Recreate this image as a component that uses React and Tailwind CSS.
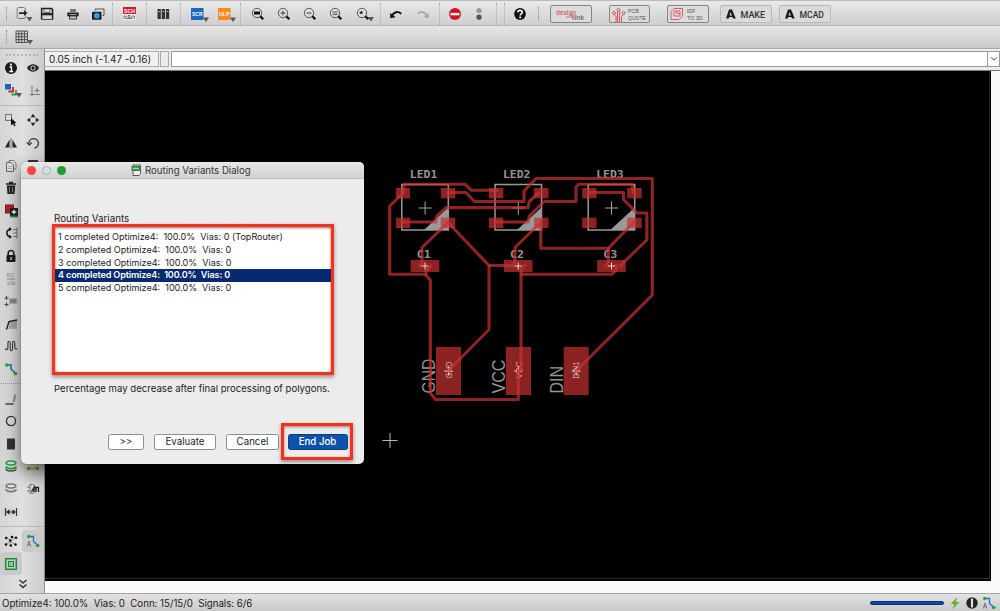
import React from "react";

function Icon({ w = 16, h = 16, children, className = "" }) {
  return (
    <svg width={w} height={h} viewBox={`0 0 ${w} ${h}`} fill="none" className={`shrink-0 ${className}`}>
      {children}
    </svg>
  );
}

const DropArrow = ({ x = 14, y = 12 }) => <path d={`M${x} ${y}h6l-3 4.5z`} fill="#555" />;

/* ---------- top toolbar icons ---------- */
function OpenIcon() {
  return (
    <Icon w={22} h={18}>
      <path d="M11.500 6V3.800L9.800 2.500H4.500A1.300 1.300 0 0 0 3.200 3.800v8.400a1.300 1.300 0 0 0 1.300 1.300h5.700A1.300 1.300 0 0 0 11.500 12.200v-1.700" stroke="#777" />
      <path d="M5 7.200h5V5.200L13.500 8.100 10 11V9H5z" fill="#222" />
      <DropArrow x={12.5} y={12} />
    </Icon>
  );
}
function SaveIcon() {
  return (
    <Icon w={14} h={14}>
      <path d="M1.600 12.600v-11h10l1 1v10" stroke="#222" strokeWidth="1.500" />
      <path d="M4 2v3.500h6V2" stroke="#666" />
      <path d="M2 7.200h10" stroke="#222" strokeWidth="2.200" />
      <path d="M2 12.500h10.500" stroke="#444" />
    </Icon>
  );
}
function PrintIcon() {
  return (
    <Icon w={14} h={14}>
      <path d="M4 2h6v3H4z" fill="#777" />
      <path d="M1.300 5.500h11.400v3.800H1.300z" fill="#222" />
      <path d="M3.500 9h7v3h-7z" fill="#ccc" stroke="#333" />
      <path d="M3.500 7.500h7" stroke="#999" />
    </Icon>
  );
}
function LayersIcon() {
  return (
    <Icon w={14} h={14}>
      <path d="M4 3.500V2h9v6.500h-1.500" stroke="#555" />
      <rect x="1" y="4.700" width="9.500" height="8" rx="1" fill="#1b1b1b" />
      <circle cx="5.800" cy="8.700" r="2.900" fill="#27a0e8" />
    </Icon>
  );
}
function SchIcon() {
  return (
    <Icon w={13} h={13}>
      <rect x="0" y="0" width="13" height="13" fill="#eee" />
      <rect x="0" y="0" width="13" height="7" fill="#cc1f35" />
      <text x="1" y="5.600" textLength="11" lengthAdjust="spacingAndGlyphs" fontSize="5.500" fontWeight="700" fill="#fff" fontFamily="Liberation Sans, sans-serif">SCH</text>
      <path d="M1 12V9h2v3M5 8.500h2v2H5zM9 12V9h2.500v3M3 11.500h6" stroke="#777" />
    </Icon>
  );
}
function LibraryIcon() {
  return (
    <Icon w={13} h={12}>
      {[0.5, 4.7, 8.9].map((x) => (
        <g key={x}>
          <rect x={x} y="1" width="3.300" height="10" fill="#333" />
          <path d={`M${x + 0.8} 3.500h1.800`} stroke="#bbb" />
        </g>
      ))}
    </Icon>
  );
}
function TagIcon({ label, fill }) {
  return (
    <Icon w={20} h={16}>
      <rect x="1" y="2" width="12.500" height="12" fill={fill} />
      <text x="2" y="10" textLength="10.500" lengthAdjust="spacingAndGlyphs" fontSize="5.500" fontWeight="700" fill="#fff" fontFamily="Liberation Sans, sans-serif">{label}</text>
      <DropArrow x={13} y={11.500} />
    </Icon>
  );
}
function ZoomIcon({ kind }) {
  return (
    <Icon w={20} h={16}>
      <circle cx="8" cy="7" r="4.700" stroke="#555" strokeWidth="1" />
      <path d="M11.300 10.300l3 3" stroke="#111" strokeWidth="2.300" />
      {kind === "fit" && <rect x="5" y="5.500" width="6" height="3" fill="#111" />}
      {kind === "in" && <path d="M5.500 7h5M8 4.500v5" stroke="#444" />}
      {kind === "out" && <path d="M5.500 7h5" stroke="#555" strokeWidth="1.200" />}
      {kind === "redraw" && <path d="M5.500 6h5M5.500 8.300h5" stroke="#444" />}
      {kind === "select" && (
        <>
          <path d="M5 7l2.500-1.800v3z" fill="#222" />
          <circle cx="7.500" cy="6.500" r="1.200" fill="#222" />
          <DropArrow x={14} y={11} />
        </>
      )}
    </Icon>
  );
}
function UndoIcon({ color = "#111", flip = false }) {
  return (
    <Icon w={14} h={12} className={flip ? "-scale-x-100" : ""}>
      <path d="M3 7.800C5 4 8.500 2.800 12.300 5.800" stroke={color} strokeWidth="2" />
      <path d="M1.200 5v5.200l5.500-1z" fill={color} />
    </Icon>
  );
}
function StopIcon() {
  return (
    <Icon w={14} h={14}>
      <circle cx="7" cy="7" r="6" fill="#d3131f" />
      <rect x="2.500" y="5.900" width="9" height="2.400" fill="#fff" />
    </Icon>
  );
}
function GoIcon() {
  return (
    <Icon w={8} h={14}>
      <circle cx="4" cy="3.500" r="2.600" fill="#999" />
      <circle cx="4" cy="10.200" r="2.600" fill="#555" />
    </Icon>
  );
}
function HelpIcon() {
  return (
    <Icon w={14} h={14}>
      <circle cx="7" cy="7" r="5.900" fill="#111" />
      <path d="M4.800 5.300c.2-2.600 4.600-2.500 4.500 0C9.200 6.800 7.300 6.800 7.200 8.500" stroke="#fff" strokeWidth="1.600" />
      <rect x="6.300" y="9.500" width="1.800" height="1.800" fill="#fff" />
    </Icon>
  );
}

const Slot = ({ className, children }) => (
  <div className={`flex h-full shrink-0 items-center justify-center ${className}`}>{children}</div>
);
const VSep = () => <div className="h-[22px] w-px shrink-0 border-l border-dotted border-[#a8a8a8]" />;
const Grip = () => <div className="h-[14px] w-px shrink-0 border-l border-dotted border-[#888]" />;

function DesignLink() {
  return (
    <div className="ml-[8px] h-[18px] w-[42px] shrink-0 rounded-[2px] border border-[#858585] bg-[#dcdcdc]">
      <svg width="40" height="16" viewBox="0 0 40 16">
        <text x="5" y="8.500" fontSize="8" textLength="20" lengthAdjust="spacingAndGlyphs" fill="#d4404c" fontFamily="Roboto, sans-serif">design</text>
        <path d="M15 11h6M21.500 9v4" stroke="#d4404c" strokeWidth=".7" />
        <text x="22" y="14" fontSize="7" textLength="11" lengthAdjust="spacingAndGlyphs" fill="#555" fontFamily="Roboto, sans-serif">link</text>
      </svg>
    </div>
  );
}
function PcbQuote() {
  return (
    <div className="ml-[17px] h-[18px] w-[41px] shrink-0 rounded-[2px] border border-[#858585] bg-[#dcdcdc]">
      <svg width="39" height="16" viewBox="0 0 39 16" fill="none">
        <g stroke="#d8505a" strokeWidth="1">
          <circle cx="4" cy="7" r="1.500" /><circle cx="8.500" cy="4" r="1.500" /><circle cx="13.500" cy="7" r="1.500" />
          <path d="M4 8.500l2 2V16M7.500 5.500V16M9.500 5.500V16M13.500 8.500l-2 2V16" />
        </g>
        <g fill="#555" fontFamily="Liberation Sans, sans-serif" fontSize="5.500">
          <text x="18" y="7.300" textLength="11" lengthAdjust="spacingAndGlyphs">PCB</text>
          <text x="18" y="13.500" textLength="18" lengthAdjust="spacingAndGlyphs">QUOTE</text>
        </g>
      </svg>
    </div>
  );
}
function Idf() {
  return (
    <div className="ml-[17px] h-[18px] w-[42px] shrink-0 rounded-[2px] border border-[#858585] bg-[#dcdcdc]">
      <svg width="40" height="16" viewBox="0 0 40 16" fill="none">
        <path d="M3 5.500l3-3h8.500V10l-3.500 3.500H3zM6 5h6v5H6zM8.500 5v2.500H12" stroke="#d8505a" strokeWidth=".9" />
        <g fill="#555" fontFamily="Liberation Sans, sans-serif" fontSize="5.500">
          <text x="19" y="7.300" textLength="8.500" lengthAdjust="spacingAndGlyphs">IDF</text>
          <text x="19" y="13.500" textLength="15.500" lengthAdjust="spacingAndGlyphs">TO 3D</text>
        </g>
      </svg>
    </div>
  );
}
function AutodeskButton({ label, className }) {
  return (
    <div className={`flex h-[18px] w-[52px] shrink-0 items-center rounded-[2px] border border-[#b9b9b9] bg-[#dadada] pl-[5px] ${className}`}>
      <svg width="10" height="10" viewBox="0 0 10 10">
        <path d="M0 9.500L3 .5h3L9.800 9.500H7L4.500 3 2.800 9.500zM3 6.500h3.500v1.500H3z" fill="#1b1b1b" />
      </svg>
      <svg width="30" height="16" viewBox="0 0 30 16" className="ml-[3px] shrink-0">
        <text x="1.500" y="11.500" fontSize="9.800" fontWeight="500" textLength="24.500" lengthAdjust="spacingAndGlyphs" fill="#333" fontFamily="Roboto, sans-serif">{label}</text>
      </svg>
    </div>
  );
}

function MainToolbar() {
  return (
    <div className="flex h-[26px] shrink-0 items-center border-b border-[#b5b5b5] border-t border-t-[#bbb] bg-linear-to-b from-[#e9e9e9] to-[#cfcfcf] pt-px">
      <Slot className="w-[13px]"><Grip /></Slot>
      <Slot className="w-[24px]"><OpenIcon /></Slot>
      <Slot className="w-[20px]"><SaveIcon /></Slot>
      <Slot className="w-[31px]"><PrintIcon /></Slot>
      <Slot className="w-[20px]"><LayersIcon /></Slot>
      <Slot className="w-[9px]"><VSep /></Slot>
      <Slot className="w-[25px]"><SchIcon /></Slot>
      <Slot className="w-[9px]"><VSep /></Slot>
      <Slot className="w-[25px]"><LibraryIcon /></Slot>
      <Slot className="w-[8px]"><VSep /></Slot>
      <Slot className="w-[32px]"><TagIcon label="SCR" fill="#1a69bd" /></Slot>
      <Slot className="w-[21px]"><TagIcon label="ULP" fill="#f68b1f" /></Slot>
      <Slot className="w-[7px]"><VSep /></Slot>
      <Slot className="w-[29px]"><ZoomIcon kind="fit" /></Slot>
      <Slot className="w-[23px]"><ZoomIcon kind="in" /></Slot>
      <Slot className="w-[29px]"><ZoomIcon kind="out" /></Slot>
      <Slot className="w-[24px]"><ZoomIcon kind="redraw" /></Slot>
      <Slot className="w-[29px]"><ZoomIcon kind="select" /></Slot>
      <Slot className="w-[4px]"><VSep /></Slot>
      <Slot className="w-[28px]"><UndoIcon /></Slot>
      <Slot className="w-[26px]"><UndoIcon color="#aaa" flip /></Slot>
      <Slot className="w-[6px]"><VSep /></Slot>
      <Slot className="w-[26px]"><StopIcon /></Slot>
      <Slot className="w-[22px]"><GoIcon /></Slot>
      <Slot className="w-[13px]"><VSep /></Slot>
      <Slot className="w-[3px]"><VSep /></Slot>
      <Slot className="w-[28px]"><HelpIcon /></Slot>
      <Slot className="w-[8px]"><Grip /></Slot>
      <DesignLink />
      <PcbQuote />
      <Idf />
      <AutodeskButton label="MAKE" className="ml-[11px]" />
      <AutodeskButton label="MCAD" className="ml-[7px]" />
    </div>
  );
}

function GridToolbar() {
  return (
    <div className="flex h-[23px] shrink-0 items-center border-b border-[#aaa] bg-linear-to-b from-[#e6e6e6] to-[#cacaca]">
      <Slot className="w-[13px]"><Grip /></Slot>
      <Slot className="w-[22px]">
        <Icon w={20} h={16}>
          <path d="M2 2h11.500v11.500H2zM4.900 2v11.500M7.750 2v11.500M10.600 2v11.500M2 4.900h11.500M2 7.750h11.500M2 10.600h11.500" stroke="#444" strokeWidth=".9" />
          <DropArrow x={13} y={11} />
        </Icon>
      </Slot>
    </div>
  );
}

/* ---------- side palette ---------- */
function InfoIcon() {
  return (
    <Icon w={14} h={14}>
      <circle cx="7" cy="7" r="6" fill="#1b1b1b" />
      <path d="M5.500 6h2v4.500M5.300 10.500h3.800" stroke="#fff" strokeWidth="1.300" />
      <rect x="6" y="2.600" width="1.900" height="1.900" fill="#fff" />
    </Icon>
  );
}
const EyeIcon = () => (
  <Icon w={14} h={10}>
    <path d="M1 5c3-5 9-5 12 0-3 5-9 5-12 0z" fill="#222" />
    <circle cx="7" cy="5" r="2.600" fill="#bbb" /><circle cx="7" cy="5" r="1.500" fill="#111" />
  </Icon>
);
const DisplayIcon = () => (
  <Icon w={18} h={16} className="ml-[6px]">
    <rect x="0" y="1" width="6" height="5.500" fill="#1c62b9" />
    <path d="M8 4v4.500H3.500" stroke="#d0202f" strokeWidth="1.800" />
    <path d="M11 7v4.500H6.500" stroke="#22a04a" strokeWidth="1.800" />
    <DropArrow x={11} y={10} />
  </Icon>
);
const MarkIcon = () => <Icon w={14} h={14} className="ml-[3px]"><path d="M4 1.500v11M1.500 10.500H12M9 4v5M6.500 6.500h5" stroke="#777" /></Icon>;
const GroupIcon = () => (
  <Icon w={14} h={14}>
    <rect x="1.500" y="1.500" width="6" height="6" stroke="#777" />
    <path d="M7 5v7.500l2-1.500 1.500 2.500 1-.8-1.200-2.400 2.200-.3z" fill="#111" />
  </Icon>
);
const MoveIcon = () => (
  <Icon w={14} h={14}>
    <path d="M7 .8l2.300 3.400H4.700zM7 13.200l2.300-3.400H4.700zM.8 7l3.400-2.300v4.600zM13.200 7L9.800 4.700v4.600z" fill="#222" />
  </Icon>
);
const MirrorIcon = () => <Icon w={14} h={12}><path d="M1 10.500L5.500 2.500v8zM13 10.500L8.500 2.500v8z" fill="#222" /><path d="M7 1v10.500" stroke="#777" /></Icon>;
const RotateIcon = () => <Icon w={14} h={14}><path d="M3 7.500A4.700 4.700 0 1 1 8.500 12" stroke="#333" strokeWidth="1.300" /><path d="M.8 6.500L3.300 9l2.500-2.500" stroke="#333" strokeWidth="1.200" /></Icon>;
const CopyIcon = () => (
  <Icon w={12} h={14}>
    <path d="M4 3V1.500h4.500L11 4v6H9" stroke="#777" />
    <path d="M1.500 3.500H6L8.500 6v6.500h-7z" fill="#ddd" stroke="#666" />
    <path d="M3.300 7.500h3.300M3.300 9.500h3.300" stroke="#999" strokeWidth=".8" />
  </Icon>
);
const PasteIcon = () => <Icon w={12} h={14}><path d="M2 2h8v10H2z" stroke="#333" strokeWidth="2" /></Icon>;
const TrashIcon = () => <Icon w={12} h={14}><path d="M1 3h10M4 1.500h4" stroke="#222" strokeWidth="1.600" /><path d="M1.800 4.500h8.400L9.500 13h-7z" fill="#222" /><path d="M4.500 6v5.500M7.500 6v5.500" stroke="#999" strokeWidth=".8" /></Icon>;
const AddIcon = () => (
  <Icon w={13} h={14}>
    <rect x=".5" y="1" width="8" height="8" fill="#b5202c" stroke="#7c1720" />
    <rect x="5" y="4" width="8" height="8" fill="#222" />
    <path d="M9 5.700v4.600M6.700 8h4.600" stroke="#fff" strokeWidth="1.300" />
    <path d="M5 12.500h8" stroke="#20923f" strokeWidth="1.800" />
  </Icon>
);
const PinswapIcon = () => (
  <Icon w={13} h={14}>
    <path d="M5 3C.8 4 .8 10 5 11" stroke="#222" strokeWidth="1.500" />
    <path d="M4 1l3 2-3 2.500zM4 8.500L7 11l-3 2z" fill="#222" />
    <path d="M12 1.500v11M8.500 3.500H12M8.500 7H12M8.500 10.500H12" stroke="#777" />
  </Icon>
);
const LockIcon = () => (
  <Icon w={12} h={14}>
    <path d="M3.200 7V4.300a2.800 2.800 0 0 1 5.600 0V7" stroke="#222" strokeWidth="1.600" />
    <rect x="1.500" y="6" width="9" height="7" rx="1" fill="#1b1b1b" />
    <rect x="5.400" y="8" width="1.300" height="3" fill="#ddd" />
  </Icon>
);
const NameIcon = () => (
  <Icon w={12} h={14}>
    <g fontSize="5.500" fill="#888" fontFamily="Liberation Sans, sans-serif">
      <text x="1.500" y="5">R2</text><text x="1.500" y="13">10k</text>
    </g>
    <path d="M2 7h8" stroke="#888" />
  </Icon>
);
const SmashIcon = () => (
  <Icon w={14} h={12}>
    <rect x="5.500" y="3.500" width="7" height="5" fill="#888" />
    <path d="M2.500 1v4M.5 3h4M2.500 7.500v4M.5 9.500h4" stroke="#444" />
    <path d="M5 4.500h8.500M5 7.500h8.500" stroke="#999" strokeWidth=".6" />
  </Icon>
);
const MiterIcon = () => <Icon w={13} h={12}><path d="M3.500 11L5 3.500l7-2V11z" fill="#aaa" /><path d="M1.500 11.500L4 3.500 12 2" stroke="#222" strokeWidth="1.400" /></Icon>;
const MeanderIcon = () => <Icon w={14} h={14}><path d="M1 9.500c2.300 2 2.900 1 2.900-1.500V4.500c0-3 2.300-3 2.300 0v5c0 3 2.300 3 2.300 0v-5c0-3 2.300-3 2.300 0V8c0 2 .5 2.500 2.200 1.500" stroke="#444" strokeWidth="1.200" /></Icon>;
const RouteIcon = () => (
  <Icon w={14} h={14}>
    <path d="M2.500 3H7v4l4 4" stroke="#1b64bb" strokeWidth="1.500" />
    <circle cx="2.700" cy="3" r="1.700" fill="#25a52c" /><circle cx="11.500" cy="11.500" r="1.800" fill="#25a52c" />
  </Icon>
);
const LineIcon = () => <Icon w={14} h={14}><path d="M1.500 12h8" stroke="#222" strokeWidth="1.200" /><path d="M9.500 10L11.500 2.500" stroke="#888" strokeWidth="1.900" /></Icon>;
const CircleIcon = () => <Icon w={14} h={14}><circle cx="7" cy="7" r="4.600" stroke="#333" strokeWidth="1.300" /></Icon>;
const RectIcon = () => <Icon w={12} h={14}><rect x="2" y="1.500" width="8" height="11" fill="#333" /></Icon>;
function DiscIcon({ color, third }) {
  return (
    <Icon w={14} h={14}>
      {third && <path d="M2 9.800c0 3 10 3 10 0" stroke="#444" strokeWidth="1.500" />}
      <path d="M2 7.300c0 3 10 3 10 0" stroke={color} strokeWidth="1.800" />
      <ellipse cx="7" cy="4" rx="4.800" ry="2" stroke={color} strokeWidth="1.600" fill="#ddd" />
    </Icon>
  );
}
const PolyIcon = () => <Icon w={14} h={14}><path d="M2 9.500h10" stroke="#d8b420" strokeWidth="2" /><circle cx="2.500" cy="9.500" r="1.500" fill="#25a52c" /><circle cx="11.500" cy="9.500" r="1.500" fill="#25a52c" /></Icon>;
const AttributeIcon = () => (
  <Icon w={14} h={14}>
    <path d="M4 2.500h2.500c4 0 4 9 0 9H4zM1 5h3M1 9h3" stroke="#777" />
    <path d="M5.500 10L8 5.500V10M10 5v5M12.500 5v5M8 5.500h5" stroke="#222" strokeWidth="1.300" />
  </Icon>
);
const DimIcon = () => <Icon w={14} h={12}><path d="M1.500 2v8M12.500 2v8M3 6h8" stroke="#333" strokeWidth="1.200" /><path d="M2 6l3.500-2.800v5.600zM12 6L8.500 3.200v5.600z" fill="#222" /></Icon>;
const RatsnestIcon = () => (
  <Icon w={14} h={14}>
    <path d="M2.500 3l4 3.500 5-3M6.500 7l-5 4M6.500 7l5 4M6.500 7v4" stroke="#777" strokeWidth=".7" />
    {[[2.2, 4], [6.2, 6.5], [8, 3], [12, 3.7], [2, 10.5], [6.8, 11.5], [11.5, 10.5]].map(([x, y]) => (
      <circle key={`${x}-${y}`} cx={x} cy={y} r="1.300" fill="#111" />
    ))}
  </Icon>
);
const AutoIcon = () => (
  <Icon w={14} h={14}>
    <path d="M3 2.500h4.500v5L11.500 11" stroke="#1b74c8" strokeWidth="1.300" />
    <circle cx="2.700" cy="2.500" r="1.700" fill="#25a52c" /><circle cx="11.700" cy="11.500" r="1.800" fill="#25a52c" />
    <path d="M1.300 12.500L3 7l1.700 5.500M2 10.500h2" stroke="#777" />
  </Icon>
);
const DrcIcon = () => (
  <Icon w={14} h={14}>
    <rect x="1.700" y="1.700" width="10.600" height="10.600" stroke="#1d8a34" strokeWidth="1.500" />
    <rect x="4.500" y="4.500" width="5" height="5" fill="#7fce8b" stroke="#1d8a34" />
  </Icon>
);

const upper = [
  [GroupIcon, MoveIcon], [MirrorIcon, RotateIcon], [CopyIcon, PasteIcon], [TrashIcon], [AddIcon], [PinswapIcon],
  [LockIcon], [NameIcon], [SmashIcon], [MiterIcon], [MeanderIcon], [RouteIcon],
];
const GreenDisc = () => <DiscIcon color="#1e9e38" third />;
const GrayDisc = () => <DiscIcon color="#777" />;
const lower = [[LineIcon], [CircleIcon], [RectIcon], [GreenDisc, PolyIcon], [GrayDisc, AttributeIcon], [DimIcon]];

function PaletteRow({ icons, active }) {
  return (
    <div className="flex h-[22.6px] shrink-0">
      {icons.map((I, i) => (
        <div key={i} className={`flex w-[22px] items-center justify-center rounded-[3px] ${active === i ? "bg-[#cacaca]" : ""}`}>
          <I />
        </div>
      ))}
    </div>
  );
}
const HSep = () => (
  <div className="flex h-[7px] shrink-0 items-center pl-px">
    <div className="w-full border-t border-dotted border-[#999]" />
  </div>
);

function Palette() {
  return (
    <aside className="flex w-[45px] shrink-0 flex-col border-r border-[#8e8e8e] bg-linear-to-r from-[#d5d5d5] via-[#e0e0e0] to-[#cccccc]">
      <div className="flex h-[8px] shrink-0 items-end px-[6px] pb-px"><div className="w-full border-t-2 border-dotted border-[#b2b2b2]" /></div>
      <PaletteRow icons={[InfoIcon, EyeIcon]} />
      <PaletteRow icons={[DisplayIcon, MarkIcon]} />
      <HSep />
      {upper.map((r, i) => <PaletteRow key={i} icons={r} />)}
      <HSep />
      {lower.map((r, i) => <PaletteRow key={i} icons={r} />)}
      <HSep />
      <PaletteRow icons={[RatsnestIcon, AutoIcon]} active={1} />
      <PaletteRow icons={[DrcIcon]} active={0} />
      <div className="flex grow items-center justify-center pl-px">
        <Icon w={10} h={10}><path d="M1.500 1L5 4l3.500-3M1.500 5.500l3.500 3 3.500-3" stroke="#333" strokeWidth="1.500" /></Icon>
      </div>
    </aside>
  );
}

/* ---------- board ---------- */
const traces = [
  "M403 193L389.700 206V274.300H425L430.300 280V393L435.500 399.500H518.300V371",
  "M431 266L426 271V274",
  "M404 192V184.200H465L471.500 190.300H497",
  "M448 192.500H466L474.300 201.500H524V191L536 178.500H652.300V295L576 371",
  "M402 222H435.500L437 216L446 207.600H528L529.300 201.500L538.500 193",
  "M448 222.500L422 247.500V263L420 266",
  "M448 222.500L489 265.500V329.500L448 371",
  "M489 265.500H511",
  "M513 266L515 262V247.500L541 222",
  "M540.800 222V248.300H608.300L634 222",
  "M608.300 248.300V262L606 266",
  "M495 222H528L529.300 216L544 201.500H576V187L579 184.200H632L633.500 193",
  "M588 192.500H623.500V199.500L637 213H646.800V240L620 266",
  "M525 265L521 268.500V371L518.300 371",
  "M521 274.300H612L616 270V265",
];

function Led({ x, name }) {
  return (
    <g>
      <path d={`M${x + 46.5} 207.500V230H${x + 22}z`} fill="#999" />
      <rect x={x} y="184.500" width="46.500" height="45.500" fill="none" stroke="#999" strokeWidth="1.500" />
      <path d={`M${x + 16.800} 208h13M${x + 23.300} 201.500v13`} stroke="#aaa" />
      <text x={x + 8} y="178.300" fontSize="10" fontWeight="700" textLength="27.500" lengthAdjust="spacingAndGlyphs" fill="#959595" fontFamily="DejaVu Sans Mono, monospace">{name}</text>
    </g>
  );
}
function LedPads({ x }) {
  return (
    <g fill="#c83232" fillOpacity=".7">
      <rect x={x - 6} y="188" width="14.300" height="10.300" />
      <rect x={x + 39} y="188" width="14.500" height="10.300" />
      <rect x={x - 6} y="217.700" width="14.300" height="10.300" />
      <rect x={x + 39} y="217.700" width="14.500" height="10.300" />
    </g>
  );
}
function Cap({ x, name }) {
  return (
    <g>
      <text x={x - 8.300} y="258" fontSize="11" fontWeight="700" textLength="14" lengthAdjust="spacingAndGlyphs" fill="#959595" fontFamily="DejaVu Sans Mono, monospace">{name}</text>
      <rect x={x - 14.300} y="260" width="28.600" height="12" fill="#c83232" fillOpacity=".7" />
    </g>
  );
}
function Pad({ x, name, inner, len }) {
  return (
    <g>
      <text transform={`translate(${x - 1.200} 393.500) rotate(-90)`} fontSize="18" textLength={len} lengthAdjust="spacingAndGlyphs" fill="#959595" fontFamily="Liberation Sans, sans-serif">{name}</text>
      <rect x={x} y="347" width="25" height="48" fill="#c83232" fillOpacity=".7" />
      <text transform={`translate(${x + 15.500} 378.500) rotate(-90)`} fontSize="8.500" textLength="17" lengthAdjust="spacingAndGlyphs" fill="#c9b5b5" fontFamily="Liberation Sans, sans-serif">{inner}</text>
      <path d={`M${x + 8} 371h9M${x + 12.500} 366.500v9`} stroke="#ddd" strokeWidth=".9" />
    </g>
  );
}

function Board() {
  return (
    <svg className="block shrink-0 bg-black" width="946" height="510" viewBox="45 71 946 510">
      {[401.800, 495, 588.200].map((x, i) => <Led key={x} x={x} name={`LED${i + 1}`} />)}
      <Cap x={425} name="C1" />
      <Cap x={518.200} name="C2" />
      <Cap x={611.500} name="C3" />
      {[401.800, 495, 588.200].map((x) => <LedPads key={x} x={x} />)}
      <Pad x={436} name="GND" inner="GND" len={35} />
      <Pad x={506} name="VCC" inner="VCC" len={34} />
      <Pad x={563.700} name="DIN" inner="DIN1" len={27.500} />
      {traces.map((d) => <path key={d} d={d} fill="none" stroke="#c83232" strokeOpacity=".72" strokeWidth="3.100" strokeLinejoin="round" strokeLinecap="round" />)}
      {[425, 518.200, 611.500].map((x) => <path key={x} d={`M${x - 3.500} 266h7M${x} 262.500v7`} stroke="#ddd" />)}
      <path d="M382.500 440.500h15M390 433v15" stroke="#bbb" />
      <path d="M45 578.500H989.500V71" fill="none" stroke="#2a2a2a" />
    </svg>
  );
}

function CommandBar() {
  return (
    <div className="flex h-[22px] shrink-0 items-start border-b border-[#777] bg-[#ececec] pt-[2px]">
      <div className="flex h-[16px] w-[114px] items-center border border-l-0 border-[#aaa] bg-[#f0f0f0] pl-[4px] text-[9.9px] leading-none text-[#222]">
        <span className="whitespace-nowrap pt-px">0.05 inch (-1.47 -0.16)</span>
      </div>
      <div className="ml-px h-[16px] w-[9px] border border-[#aaa]" />
      <div className="ml-[2px] h-[16px] grow border border-[#999] bg-white" />
      <div className="flex h-[16px] w-[12px] items-center justify-center border border-l-0 border-[#999] bg-white">
        <Icon w={8} h={6}><path d="M1 1.200l3 3 3-3" stroke="#444" /></Icon>
      </div>
    </div>
  );
}

function StatusBar() {
  return (
    <div className="flex h-[18px] shrink-0 items-center border-t border-[#a5a5a5] bg-linear-to-b from-[#e2e2e2] to-[#c9c9c9] pl-[2px] text-[#222]">
      <span className="whitespace-pre pt-[2px] text-[9.68px] leading-none">{"Optimize4: 100.0%  Vias: 0  Conn: 15/15/0  Signals: 6/6"}</span>
      <div className="ml-auto h-[4px] w-[74px] rounded-full border border-[#123576] bg-[#0b48a8]" />
      <Icon w={10} h={14} className="ml-[6px]"><path d="M7.500 1L.5 8h3.700L2.500 13 9.500 6H5.800z" fill="#67b32e" /></Icon>
      <Icon w={14} h={14} className="ml-[5px]"><circle cx="7" cy="7" r="5.700" fill="#222" /><path d="M7 2.500v9" stroke="#ddd" strokeWidth="2.200" /></Icon>
      <div className="mr-[4px] ml-[3px]"><AutoIcon /></div>
    </div>
  );
}

/* ---------- dialog ---------- */
const variants = [
  "1 completed Optimize4:  100.0%  Vias: 0 (TopRouter)",
  "2 completed Optimize4:  100.0%  Vias: 0",
  "3 completed Optimize4:  100.0%  Vias: 0",
  "4 completed Optimize4:  100.0%  Vias: 0",
  "5 completed Optimize4:  100.0%  Vias: 0",
];

function Button({ className, children }) {
  return (
    <div className={`flex h-[16px] items-center justify-center rounded-[2.500px] border pt-px text-[9.7px] leading-none ${className}`}>{children}</div>
  );
}

function Dialog() {
  return (
    <div className="absolute left-[21px] top-[162px] flex h-[302px] w-[343px] flex-col rounded-[5px] bg-[#ececec] text-[#222] shadow-[0_8px_18px_rgba(0,0,0,0.6),0_0_1px_rgba(0,0,0,0.7)]">
      <div className="flex h-[17px] shrink-0 items-center rounded-t-[5px] border-b border-[#bcbcbc] bg-linear-to-b from-[#e8e8e8] to-[#d2d2d2] pl-[6px]">
        <span className="size-[9px] rounded-full bg-[#fb4447]" />
        <span className="ml-[6px] size-[9px] rounded-full border border-[#aaa] bg-[#dcdcdc]" />
        <span className="ml-[6px] size-[9px] rounded-full bg-[#1e9e2f]" />
        <Icon w={11} h={12} className="ml-[65px]">
          <path d="M2 1h7.500v8.500L8 11.500H2z" fill="#eee" stroke="#555" />
          <rect x=".5" y="2" width="9" height="5" fill="#2c8a3e" />
          <path d="M2 4.500h6" stroke="#cfe8d3" strokeWidth="1.300" strokeDasharray="1.500 .7" />
        </Icon>
        <span className="ml-[3px] whitespace-nowrap pt-[2px] text-[9.65px] leading-none text-[#333]">Routing Variants Dialog</span>
      </div>
      <div className="ml-[33px] mt-[34px] text-[9.75px] leading-[11px]">Routing Variants</div>
      <div className="ml-[31px] mt-0 h-[151px] w-[282px] shrink-0 border-[3.700px] border-[#fb301c] bg-white pt-[4px] shadow-[0_2px_4px_rgba(0,0,0,0.4),inset_0_1px_3px_rgba(0,0,0,0.55)]">
        {variants.map((v, i) => (
          <div
            key={v}
            className={`h-[12.750px] whitespace-pre pl-[3px] text-[9.05px] leading-[12px] ${i === 3 ? "bg-[#062a70] font-semibold tracking-[-0.015em] text-white" : ""}`}
          >
            {v}
          </div>
        ))}
      </div>
      <div className="ml-[33px] mt-[8px] whitespace-nowrap text-[9.6px] leading-[12px]">Percentage may decrease after final processing of polygons.</div>
      <div className="mt-[28px] flex items-center pl-[87px]">
        <Button className="w-[36px] border-[#8d8d8d] bg-white">&gt;&gt;</Button>
        <Button className="ml-[10px] w-[62px] border-[#8d8d8d] bg-white">Evaluate</Button>
        <Button className="ml-[10px] w-[53px] border-[#8d8d8d] bg-white">Cancel</Button>
        <div className="ml-[2px] flex h-[37px] w-[72px] items-center justify-center border-[3.700px] border-[#fb301c] shadow-[0_2px_4px_rgba(0,0,0,0.4),inset_0_1px_3px_rgba(0,0,0,0.4)]">
          <Button className="ml-px w-[60px] border-[#123c7d] bg-[#0e53ab] font-medium text-white">End Job</Button>
        </div>
      </div>
    </div>
  );
}

export default function App() {
  return (
    <div className="relative flex h-[611px] w-[1000px] flex-col overflow-hidden bg-[#ececec] font-[Inter,sans-serif]">
      <MainToolbar />
      <GridToolbar />
      <div className="flex h-[544px] shrink-0">
        <Palette />
        <div className="flex min-w-0 grow flex-col">
          <CommandBar />
          <div className="flex bg-[#fafafa]">
            <Board />
          </div>
          <div className="grow bg-[#fafafa]" />
        </div>
      </div>
      <StatusBar />
      <Dialog />
    </div>
  );
}
